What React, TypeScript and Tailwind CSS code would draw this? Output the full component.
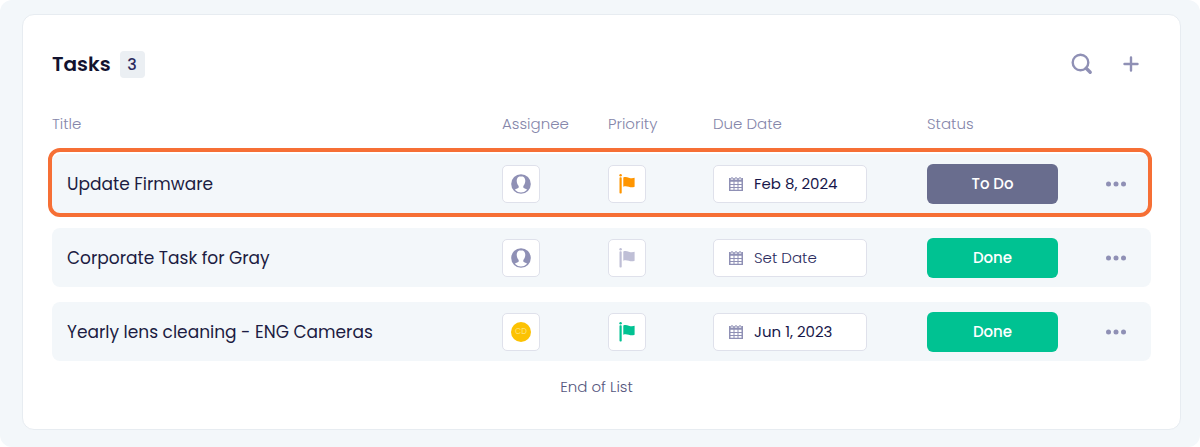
import clsx from "clsx";

type Task = {
  title: string;
  initials?: string;
  flag: string;
  priority: string;
  date?: string;
  status: "To Do" | "Done";
  highlighted?: boolean;
};

const tasks: Task[] = [
  {
    title: "Update Firmware",
    flag: "text-[#ff9500]",
    priority: "Medium",
    date: "Feb 8, 2024",
    status: "To Do",
    highlighted: true,
  },
  {
    title: "Corporate Task for Gray",
    flag: "text-[#bfbfd6]",
    priority: "None",
    status: "Done",
  },
  {
    title: "Yearly lens cleaning - ENG Cameras",
    initials: "CD",
    flag: "text-[#00c292]",
    priority: "Low",
    date: "Jun 1, 2023",
    status: "Done",
  },
];

function SearchIcon() {
  return (
    <svg width="22" height="22" viewBox="0 0 22 22" fill="none" stroke="currentColor" aria-hidden="true">
      <circle cx="9.5" cy="9.5" r="7.8" strokeWidth="2.4" />
      <path d="M15.2 15.2l4 4" strokeWidth="3.4" strokeLinecap="round" />
    </svg>
  );
}

function PlusIcon() {
  return (
    <svg width="16" height="16" viewBox="0 0 16 16" fill="none" stroke="currentColor" aria-hidden="true">
      <path d="M8 1.5v13M1.5 8h13" strokeWidth="2.4" strokeLinecap="round" />
    </svg>
  );
}

function PersonIcon() {
  return (
    <svg width="20" height="20" viewBox="0 0 20 20" aria-hidden="true">
      <circle cx="10" cy="10" r="9.8" fill="#8f90b5" />
      <path
        d="M10 2.2c-2.8 0-4.3 2-4.3 4.6 0 2.2.9 4.1 2 5.2v1.6c-.3.9-2.4 1.2-3.9 2.2a8.5 8.5 0 0 0 12.4 0c-1.5-1-3.6-1.3-3.9-2.2V12c1.1-1.1 2-3 2-5.2 0-2.6-1.5-4.6-4.3-4.6z"
        fill="#fff"
      />
    </svg>
  );
}

function FlagIcon() {
  return (
    <svg width="16" height="20" viewBox="0 0 16 20" fill="currentColor" aria-hidden="true">
      <circle cx="1.6" cy="1.3" r="1.2" />
      <rect x="0.5" y="3.3" width="2.2" height="16.2" rx="0.8" />
      <path d="M4.3 3.5c2-1 3.7-.4 5.5.2 1.9.6 3.7.8 5.8.1v9c-2.1.8-3.9.6-5.8 0-1.8-.6-3.5-1-5.5-.1z" />
    </svg>
  );
}

function CalendarIcon() {
  return (
    <svg width="14" height="14" viewBox="0 0 14 14" aria-hidden="true">
      <path d="M0 1h14v13H0z" fill="#8f90b5" />
      <path
        d="M1.5 4.8h3V7h-3zM5.5 4.8h3V7h-3zM9.5 4.8h3V7h-3zM1.5 8h3v2h-3zM5.5 8h3v2h-3zM9.5 8h3v2h-3zM1.5 11h3v1.7h-3zM5.5 11h3v1.7h-3zM9.5 11h3v1.7h-3z"
        fill="#fff"
      />
      <path d="M3 0v2.7M7 0v2.7M11 0v2.7" stroke="#fff" strokeWidth="2.4" />
      <path d="M3 0v2.3M7 0v2.3M11 0v2.3" stroke="#8f90b5" strokeWidth="1.2" />
    </svg>
  );
}

function DotsIcon() {
  return (
    <svg width="20" height="6" viewBox="0 0 20 6" fill="currentColor" aria-hidden="true">
      <circle cx="2.5" cy="3" r="2.5" />
      <circle cx="10" cy="3" r="2.5" />
      <circle cx="17.5" cy="3" r="2.5" />
    </svg>
  );
}

const tile = "flex size-[38px] items-center justify-center rounded-[5px] border border-[#dfe1eb] bg-white";

function TaskRow({ task }: { task: Task }) {
  return (
    <tr className="relative h-[59px]">
      <td className="rounded-l-lg bg-[#f3f7fa] pt-0.5 pl-[15px] text-[17px] text-[#1c1c42]">
        {task.title}
        {/* highlight ring around the whole row */}
        {task.highlighted && (
          <span className="pointer-events-none absolute -top-1.5 -right-px -bottom-1 -left-1 rounded-xl border-4 border-[#f66f35]" />
        )}
      </td>
      <td className="bg-[#f3f7fa]">
        <button className={tile} aria-label="Assignee">
          {task.initials ? (
            <span className="flex size-5 items-center justify-center rounded-full bg-[#fcc203] text-[8px] text-[#ffe27a]">
              {task.initials}
            </span>
          ) : (
            <PersonIcon />
          )}
        </button>
      </td>
      <td className="bg-[#f3f7fa]">
        <button className={clsx(tile, task.flag)} aria-label={`Priority: ${task.priority}`}>
          <FlagIcon />
        </button>
      </td>
      <td className="bg-[#f3f7fa]">
        <button
          className={clsx(
            "flex h-[38px] w-[154px] items-center gap-[11px] rounded-[5px] border border-[#dfe1eb] bg-white pt-px pl-[15px] text-[15px]",
            task.date ? "text-[#17174a]" : "font-light text-[#2b2b5e]"
          )}
        >
          <CalendarIcon />
          {task.date ?? "Set Date"}
        </button>
      </td>
      <td className="bg-[#f3f7fa]">
        <button
          className={clsx(
            "h-10 w-[131px] rounded-md pt-px text-[15px] font-medium text-white",
            task.status === "Done" ? "bg-[#00c292]" : "bg-[#696d8e]"
          )}
        >
          {task.status}
        </button>
      </td>
      <td className="rounded-r-lg bg-[#f3f7fa] text-[#8f90b5]">
        <button className="block" aria-label="More actions">
          <DotsIcon />
        </button>
      </td>
    </tr>
  );
}

export default function App() {
  return (
    <main className="rounded-xl bg-[#f3f7fa] pt-[14px] pr-[19px] pb-[17px] pl-[22px] font-['Poppins','Inter',sans-serif]">
      <section className="rounded-xl border border-[#e7ecf1] bg-white px-[29px] pt-[33px] pb-[31px]">
        <header className="flex h-8 items-center">
          <h1 className="text-xl font-semibold text-[#12122f]">Tasks</h1>
          <span className="ml-[9px] flex h-[27px] w-[25px] items-center justify-center rounded bg-[#ebeff3] pt-px text-base font-medium text-[#2b2b5e]">
            {tasks.length}
          </span>
          <div className="mr-3 ml-auto flex items-center gap-[30px] text-[#8f90b5]">
            <button aria-label="Search tasks">
              <SearchIcon />
            </button>
            <button aria-label="Add task">
              <PlusIcon />
            </button>
          </div>
        </header>

        <table className="mt-[14px] w-full table-fixed border-separate border-spacing-x-0 border-spacing-y-[15px]">
          <thead>
            <tr className="h-[30px] text-left text-[15px] text-[#8586aa]">
              <th className="font-light">Title</th>
              <th className="w-[106px] font-light">Assignee</th>
              <th className="w-[105px] font-light">Priority</th>
              <th className="w-[214px] font-light">Due Date</th>
              <th className="w-[179px] font-light">Status</th>
              <th className="w-[45px]" />
            </tr>
          </thead>
          <tbody>
            {tasks.map((task) => (
              <TaskRow key={task.title} task={task} />
            ))}
          </tbody>
        </table>

        <p className="pr-[10px] text-center text-[15px] leading-[22px] font-light text-[#55567d]">End of List</p>
      </section>
    </main>
  );
}
